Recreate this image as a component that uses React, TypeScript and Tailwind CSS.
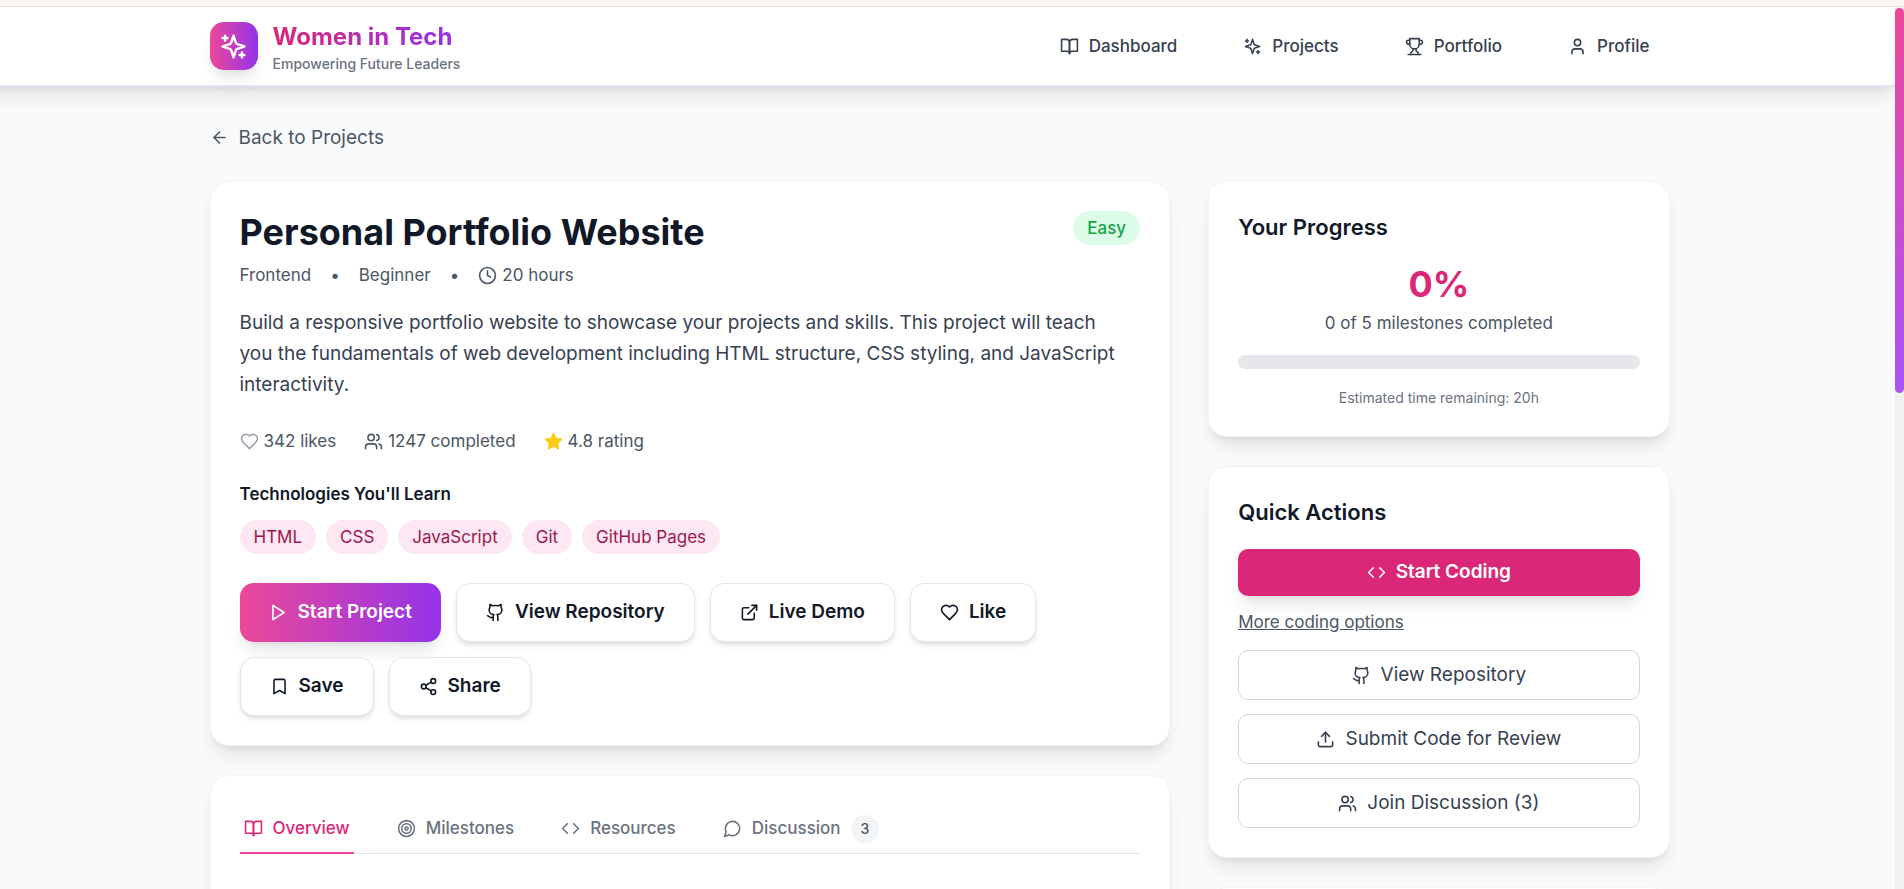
import React from 'react'
import { ArrowLeft, Clock, Code, ExternalLink, Github, Share2, Target, Upload, User, Users } from 'lucide-react'

type IconProps = { className?: string }

// Outline icons on a 24px grid, one entry per stroke
const outline = (paths: string[]): React.FC<IconProps> => {
  const Icon: React.FC<IconProps> = ({ className }) => (
    <svg
      viewBox="0 0 24 24"
      fill="none"
      stroke="currentColor"
      strokeWidth="2"
      strokeLinecap="round"
      strokeLinejoin="round"
      aria-hidden="true"
      className={className}
    >
      {paths.map((d) => (
        <path key={d} d={d} />
      ))}
    </svg>
  )
  return Icon
}

const Sparkles = outline([
  'm12 3-1.912 5.813a2 2 0 0 1-1.275 1.275L3 12l5.813 1.912a2 2 0 0 1 1.275 1.275L12 21l1.912-5.813a2 2 0 0 1 1.275-1.275L21 12l-5.813-1.912a2 2 0 0 1-1.275-1.275L12 3Z',
  'M5 3v4',
  'M19 17v4',
  'M3 5h4',
  'M17 19h4',
])

const BookOpen = outline([
  'M2 3h6a4 4 0 0 1 4 4v14a3 3 0 0 0-3-3H2z',
  'M22 3h-6a4 4 0 0 0-4 4v14a3 3 0 0 1 3-3h7z',
])

const Trophy = outline([
  'M6 9H4.5a2.5 2.5 0 0 1 0-5H6',
  'M18 9h1.5a2.5 2.5 0 0 0 0-5H18',
  'M4 22h16',
  'M10 14.66V17c0 .55-.47.98-.97 1.21C7.85 18.75 7 20.24 7 22',
  'M14 14.66V17c0 .55.47.98.97 1.21C16.15 18.75 17 20.24 17 22',
  'M18 2H6v7a6 6 0 0 0 12 0V2Z',
])

const Heart = outline([
  'M19 14c1.49-1.46 3-3.21 3-5.5A5.5 5.5 0 0 0 16.5 3c-1.76 0-3 .5-4.5 2-1.5-1.5-2.74-2-4.5-2A5.5 5.5 0 0 0 2 8.5c0 2.3 1.5 4.05 3 5.5l7 7Z',
])

const Star = outline(['M12 2l3.09 6.26L22 9.27l-5 4.87 1.18 6.88L12 17.77l-6.18 3.25L7 14.14 2 9.27l6.91-1.01L12 2z'])

const Play = outline(['M5 3l14 9-14 9V3z'])

const Bookmark = outline(['m19 21-7-4-7 4V5a2 2 0 0 1 2-2h10a2 2 0 0 1 2 2v16z'])

const MessageCircle = outline(['M7.9 20A9 9 0 1 0 4 16.1L2 22Z'])

const navItems = [
  { label: 'Dashboard', icon: BookOpen },
  { label: 'Projects', icon: Sparkles },
  { label: 'Portfolio', icon: Trophy },
  { label: 'Profile', icon: User },
]

const technologies = ['HTML', 'CSS', 'JavaScript', 'Git', 'GitHub Pages']

const projectActions = [
  { label: 'View Repository', icon: Github },
  { label: 'Live Demo', icon: ExternalLink },
  { label: 'Like', icon: Heart },
  { label: 'Save', icon: Bookmark },
  { label: 'Share', icon: Share2 },
]

const tabs = [
  { label: 'Overview', icon: BookOpen, active: true },
  { label: 'Milestones', icon: Target },
  { label: 'Resources', icon: Code },
  { label: 'Discussion', icon: MessageCircle, count: 3 },
]

const quickActions = [
  { label: 'View Repository', icon: Github },
  { label: 'Submit Code for Review', icon: Upload },
  { label: 'Join Discussion (3)', icon: Users },
]

const Card: React.FC<{ className?: string; children?: React.ReactNode }> = ({ className = '', children }) => (
  <section
    className={`bg-white border border-gray-100 rounded-[19px] p-[29px] shadow-[0_12px_18px_-4px_rgba(0,0,0,0.1),0_5px_7px_-5px_rgba(0,0,0,0.1)] ${className}`}
  >
    {children}
  </section>
)

const Header: React.FC = () => (
  <header className="relative z-10 -ml-4 bg-white border-b-2 border-slate-200 px-4 shadow-[0_12px_18px_-4px_rgba(0,0,0,0.1),0_5px_7px_-5px_rgba(0,0,0,0.1)]">
    <div className="max-w-[1536px] mx-auto px-[38px] h-[78px] flex items-center justify-between">
      <div className="flex items-center gap-[15px]">
        <div className="w-12 h-12 rounded-[14px] bg-linear-to-r/srgb from-[#ec4899] to-[#9333ea] flex items-center justify-center shadow-[0_12px_18px_-4px_rgba(0,0,0,0.1),0_5px_7px_-5px_rgba(0,0,0,0.1)]">
          <Sparkles className="w-[29px] h-[29px] text-white" />
        </div>
        <div>
          <p className="w-fit text-[24px] leading-[36px] font-bold text-transparent bg-clip-text bg-linear-to-r/srgb from-[#db2777] to-[#9333ea]">
            Women in Tech
          </p>
          <p className="text-[14px] leading-[18px] font-medium text-[#6b7280]">Empowering Future Leaders</p>
        </div>
      </div>

      <nav className="flex items-center gap-[26px]">
        {navItems.map(({ label, icon: Icon }) => (
          <a key={label} href="#" className="flex items-center gap-[10px] px-5 text-[17px] leading-6 font-medium text-[#374151]">
            <Icon className="w-[19px] h-[19px]" />
            {label}
          </a>
        ))}
      </nav>
    </div>
  </header>
)

const ProjectCard: React.FC = () => (
  <Card>
    <div className="flex items-start justify-between">
      <div>
        <h1 className="text-[36px] leading-[43px] font-bold text-[#111827]">Personal Portfolio Website</h1>
        <div className="mt-[9px] flex items-center gap-[19px] text-[17px] leading-6 text-[#4b5563]">
          <span>Frontend</span>
          <span>•</span>
          <span>Beginner</span>
          <span>•</span>
          <span className="flex items-center gap-[5px]">
            <Clock className="w-[19px] h-[19px]" />
            20 hours
          </span>
        </div>
      </div>
      <span className="rounded-full bg-[#dcfce7] px-[14px] py-[5px] text-[17px] leading-6 font-medium text-[#16a34a]">Easy</span>
    </div>

    <p className="mt-5 pr-[10px] text-[19px] leading-[31px] text-[#374151]">
      Build a responsive portfolio website to showcase your projects and skills. This project will teach you the
      fundamentals of web development including HTML structure, CSS styling, and JavaScript interactivity.
    </p>

    {/* Stats */}
    <div className="mt-[29px] flex items-center gap-7 text-[17px] leading-6 text-[#4b5563]">
      <span className="flex items-center gap-[5px]">
        <Heart className="w-[19px] h-[19px] text-[#9ca3af]" />
        342 likes
      </span>
      <span className="flex items-center gap-[5px]">
        <Users className="w-[19px] h-[19px]" />
        1247 completed
      </span>
      <span className="flex items-center gap-[5px]">
        <Star className="w-[19px] h-[19px] fill-current text-[#facc15]" />
        4.8 rating
      </span>
    </div>

    <h2 className="mt-[29px] text-[17px] leading-6 font-semibold text-[#111827]">Technologies You'll Learn</h2>
    <ul className="mt-[14px] flex flex-wrap gap-[10px]">
      {technologies.map((tech) => (
        <li key={tech} className="rounded-full bg-[#fce7f3] px-[14px] py-[5px] text-[17px] leading-6 text-[#9d174d]">
          {tech}
        </li>
      ))}
    </ul>

    <div className="mt-[29px] flex flex-wrap gap-[15px]">
      <button className="flex items-center gap-[10px] rounded-[14px] bg-linear-to-r/srgb from-[#ec4899] to-[#9333ea] px-[29px] h-[59px] text-[19px] font-semibold text-white shadow-[0_12px_18px_-4px_rgba(0,0,0,0.1),0_5px_7px_-5px_rgba(0,0,0,0.1)]">
        <Play className="w-[19px] h-[19px]" />
        Start Project
      </button>
      {projectActions.map(({ label, icon: Icon }) => (
        <button
          key={label}
          className="flex items-center gap-[10px] rounded-[14px] border border-gray-200 bg-white px-[29px] h-[59px] text-[19px] font-semibold text-[#111827] shadow-md"
        >
          <Icon className="w-[19px] h-[19px]" />
          {label}
        </button>
      ))}
    </div>
  </Card>
)

const TabsCard: React.FC = () => (
  <Card className="h-[400px]">
    <div className="flex gap-[39px] border-b border-gray-200">
      {tabs.map(({ label, icon: Icon, active, count }) => (
        <button
          key={label}
          className={`-mb-px flex h-[49px] items-center gap-[10px] border-b-2 px-1 text-[17px] font-medium ${
            active ? 'border-[#ec4899] text-[#db2777]' : 'border-transparent text-[#6b7280]'
          }`}
        >
          <Icon className="w-[19px] h-[19px]" />
          {label}
          {count && (
            <span className="rounded-full bg-gray-100 px-[10px] py-[2px] text-[14px] leading-6 text-[#4b5563]">{count}</span>
          )}
        </button>
      ))}
    </div>
  </Card>
)

const ProgressCard: React.FC = () => (
  <Card>
    <h2 className="text-[22px] leading-8 font-semibold text-[#111827]">Your Progress</h2>
    <div className="mt-5 text-center">
      <p className="text-[36px] leading-[43px] font-bold text-[#db2777]">0%</p>
      <p className="mt-[5px] text-[17px] leading-6 text-[#4b5563]">0 of 5 milestones completed</p>
    </div>
    <div className="mt-5 h-[14px] rounded-full bg-[#e5e7eb]" />
    <p className="mt-[19px] text-center text-[14px] leading-[19px] text-[#6b7280]">Estimated time remaining: 20h</p>
  </Card>
)

const QuickActions: React.FC = () => (
  <Card>
    <h2 className="text-[22px] leading-8 font-semibold text-[#111827]">Quick Actions</h2>
    <div className="mt-[21px] flex flex-col gap-[14px]">
      <button className="flex h-[47px] items-center justify-center gap-[10px] rounded-[10px] bg-[#db2777] text-[19px] font-semibold text-white shadow-[0_12px_18px_-4px_rgba(0,0,0,0.1),0_5px_7px_-5px_rgba(0,0,0,0.1)]">
        <Code className="w-[19px] h-[19px]" />
        Start Coding
      </button>
      <a href="#" className="w-fit pb-[2px] text-[17px] leading-6 text-[#4b5563] underline">
        More coding options
      </a>
      {quickActions.map(({ label, icon: Icon }) => (
        <button
          key={label}
          className="flex h-[50px] items-center justify-center gap-[10px] rounded-[10px] border border-gray-300 text-[19px] text-[#374151]"
        >
          <Icon className="w-[19px] h-[19px]" />
          {label}
        </button>
      ))}
    </div>
  </Card>
)

const App: React.FC = () => {
  return (
    <div className="flex h-screen flex-col overflow-hidden font-['Inter',sans-serif]">
      <div className="h-[7px] shrink-0 border-b border-[#f5dddc] bg-[#fff6f4]" />

      <div className="flex min-h-0 flex-1">
        <div className="flex-1 overflow-hidden bg-[#f9fafc]">
          <Header />
          <div className="pr-4">
            <main className="max-w-[1536px] mx-auto px-[38px] pt-9">
              <a href="#" className="flex w-fit items-center gap-[10px] text-[19px] leading-[29px] text-[#4b5563]">
                <ArrowLeft className="w-[19px] h-[19px]" />
                Back to Projects
              </a>

              <div className="mt-[29px] grid grid-cols-3 gap-[38px]">
                <div className="col-span-2 flex flex-col gap-[29px]">
                  <ProjectCard />
                  <TabsCard />
                </div>
                <div className="flex flex-col gap-[29px]">
                  <ProgressCard />
                  <QuickActions />
                  <Card className="flex-1" />
                </div>
              </div>
            </main>
          </div>
        </div>

        {/* Scroll track */}
        <div className="w-[9px] bg-[#f1f1f1] pt-px">
          <div className="h-[385px] rounded-full bg-linear-to-b/srgb from-[#ec4899] to-[#a855f7]" />
        </div>
      </div>
    </div>
  )
}

export default App
